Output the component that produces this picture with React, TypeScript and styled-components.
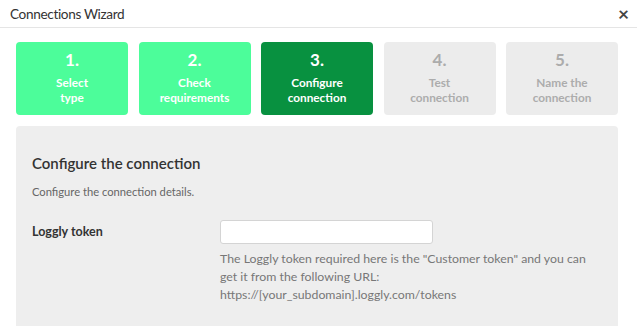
import React from "react";
import styled, { createGlobalStyle } from "styled-components";

type StepState = "done" | "active" | "todo";

interface Step {
  num: number;
  label: string[];
  state: StepState;
}

const steps: Step[] = [
  { num: 1, label: ["Select", "type"], state: "done" },
  { num: 2, label: ["Check", "requirements"], state: "done" },
  { num: 3, label: ["Configure", "connection"], state: "active" },
  { num: 4, label: ["Test", "connection"], state: "todo" },
  { num: 5, label: ["Name the", "connection"], state: "todo" },
];

const tileColors: Record<StepState, { bg: string; fg: string }> = {
  done: { bg: "#4cfd9a", fg: "#ffffff" },
  active: { bg: "#089140", fg: "#ffffff" },
  todo: { bg: "#ececec", fg: "#acacac" },
};

export default function App() {
  return (
    <>
      <GlobalStyle />
      <Dialog>
        <Header>
          <Title>Connections Wizard</Title>
          <Close>×</Close>
        </Header>
        <Body>
          <StepRow>
            {steps.map((s) => (
              <StepTile key={s.num} $state={s.state}>
                <StepNum>{s.num}.</StepNum>
                <StepLabel>
                  {s.label[0]}
                  <br />
                  {s.label[1]}
                </StepLabel>
              </StepTile>
            ))}
          </StepRow>
          <Panel>
            <PanelTitle>Configure the connection</PanelTitle>
            <PanelIntro>Configure the connection details.</PanelIntro>
            <FieldRow>
              <FieldLabel>Loggly token</FieldLabel>
              <FieldBody>
                <TextInput type="text" />
                <HelpText>
                  The Loggly token required here is the "Customer token" and you can
                  get it from the following URL:
                  <br />
                  https://[your_subdomain].loggly.com/tokens
                </HelpText>
              </FieldBody>
            </FieldRow>
          </Panel>
        </Body>
      </Dialog>
    </>
  );
}

const GlobalStyle = createGlobalStyle`
  html, body {
    margin: 0;
    padding: 0;
    background: #ffffff;
    overflow: hidden;
  }
  body {
    font-family: "Segoe UI", Lato, "Liberation Sans", sans-serif;
    color: #333333;
  }
`;

const Dialog = styled.div`
  width: 637px;
  height: 326px;
  overflow: hidden;
  background: #ffffff;
`;

const Header = styled.div`
  display: flex;
  align-items: center;
  justify-content: space-between;
  height: 28px;
  padding: 0 8px 0 10px;
  border-bottom: 1px solid #e5e5e5;
  box-sizing: border-box;
`;

const Title = styled.h1`
  margin: 0;
  font-size: 13.6px;
  font-weight: 400;
  color: #333333;
  letter-spacing: -0.35px;
`;

const Close = styled.span`
  font-size: 19px;
  font-weight: 700;
  color: #444444;
  line-height: 1;
  margin-top: -1px;
`;

const Body = styled.div`
  padding: 14px 19px 0 16px;
`;

const StepRow = styled.div`
  display: grid;
  grid-template-columns: repeat(5, 112px);
  column-gap: 10.5px;
`;

const StepTile = styled.div<{ $state: StepState }>`
  height: 73px;
  border-radius: 4px;
  background: ${(p) => tileColors[p.$state].bg};
  color: ${(p) => tileColors[p.$state].fg};
  display: flex;
  flex-direction: column;
  align-items: center;
  padding-top: 8px;
  box-sizing: border-box;
  font-family: Lato, "Liberation Sans", sans-serif;
  font-weight: 700;
  text-align: center;
`;

const StepNum = styled.div`
  font-size: 17px;
  line-height: 20px;
`;

const StepLabel = styled.div`
  font-size: 11.8px;
  line-height: 15px;
  margin-top: 5px;
`;

const Panel = styled.div`
  margin-top: 11px;
  background: #eeeeee;
  border-radius: 4px 4px 0 0;
  height: 220px;
  padding: 27px 16px 0 16px;
  box-sizing: border-box;
`;

const PanelTitle = styled.h2`
  margin: 0;
  font-size: 15px;
  font-weight: 600;
  color: #333333;
  line-height: 20px;
`;

const PanelIntro = styled.p`
  margin: 11px 0 0 0;
  font-size: 11.2px;
  color: #666666;
  line-height: 16px;
`;

const FieldRow = styled.div`
  display: flex;
  margin-top: 20px;
`;

const FieldLabel = styled.label`
  flex: 0 0 188px;
  font-size: 12.5px;
  font-weight: 700;
  color: #333333;
  padding-top: 4px;
`;

const FieldBody = styled.div`
  display: flex;
  flex-direction: column;
  min-width: 0;
`;

const TextInput = styled.input`
  width: 213px;
  height: 24px;
  box-sizing: border-box;
  border: 1px solid #d4d4d4;
  border-radius: 3px;
  background: #ffffff;
  outline: none;
`;

const HelpText = styled.p`
  margin: 6px 0 0 0;
  width: 374px;
  font-size: 12.3px;
  line-height: 18px;
  color: #777777;
`;
